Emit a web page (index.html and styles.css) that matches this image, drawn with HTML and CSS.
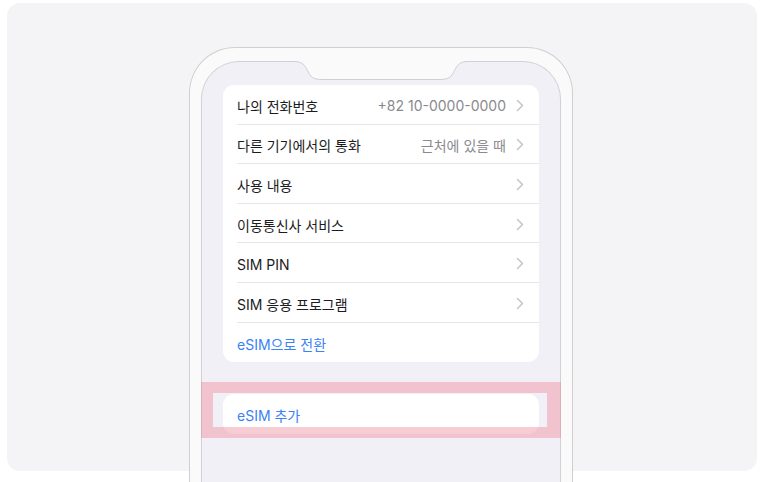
FILE: index.html
```html
<!DOCTYPE html>
<html lang="ko">
<head>
  <meta charset="UTF-8" />
  <meta name="viewport" content="width=device-width, initial-scale=1.0"/>
  <title>셀룰러 설정</title>
  <link rel="stylesheet" href="styles.css">
</head>
<body>
  <div class="stage">
    <div class="phone">
      <div class="screen">
        <svg class="notch" width="176" height="21" viewBox="0 0 176 21">
          <path d="M0,0.5 C9,0.5 11,3 14.5,9.5 C18,16.5 20,18.5 30,18.5 L146,18.5 C156,18.5 158,16.5 161.5,9.5 C165,3 167,0.5 176,0.5 L176,-2 L0,-2 Z" fill="#fafafa"/>
          <path d="M0,0.5 C9,0.5 11,3 14.5,9.5 C18,16.5 20,18.5 30,18.5 L146,18.5 C156,18.5 158,16.5 161.5,9.5 C165,3 167,0.5 176,0.5" fill="none" stroke="#cfcfd3" stroke-width="1"/>
        </svg>

        <div class="group">
          <div class="row">
            <div class="row-body">
              <span class="label">나의 전화번호</span>
              <span class="value">+82 10-0000-0000</span>
              <svg class="chevron" width="8" height="13" viewBox="0 0 8 13"><path d="M1.5,1.5 L6.5,6.5 L1.5,11.5" /></svg>
            </div>
          </div>
          <div class="row">
            <div class="row-body">
              <span class="label">다른 기기에서의 통화</span>
              <span class="value">근처에 있을 때</span>
              <svg class="chevron" width="8" height="13" viewBox="0 0 8 13"><path d="M1.5,1.5 L6.5,6.5 L1.5,11.5" /></svg>
            </div>
          </div>
          <div class="row">
            <div class="row-body">
              <span class="label">사용 내용</span>
              <svg class="chevron" width="8" height="13" viewBox="0 0 8 13"><path d="M1.5,1.5 L6.5,6.5 L1.5,11.5" /></svg>
            </div>
          </div>
          <div class="row">
            <div class="row-body">
              <span class="label">이동통신사 서비스</span>
              <svg class="chevron" width="8" height="13" viewBox="0 0 8 13"><path d="M1.5,1.5 L6.5,6.5 L1.5,11.5" /></svg>
            </div>
          </div>
          <div class="row">
            <div class="row-body">
              <span class="label">SIM PIN</span>
              <svg class="chevron" width="8" height="13" viewBox="0 0 8 13"><path d="M1.5,1.5 L6.5,6.5 L1.5,11.5" /></svg>
            </div>
          </div>
          <div class="row">
            <div class="row-body">
              <span class="label">SIM 응용 프로그램</span>
              <svg class="chevron" width="8" height="13" viewBox="0 0 8 13"><path d="M1.5,1.5 L6.5,6.5 L1.5,11.5" /></svg>
            </div>
          </div>
          <div class="row">
            <div class="row-body">
              <span class="label link">eSIM으로 전환</span>
            </div>
          </div>
        </div>

        <div class="group group-add">
          <div class="row">
            <div class="row-body">
              <span class="label link">eSIM 추가</span>
            </div>
          </div>
          <div class="highlight"></div>
        </div>
      </div>
    </div>
  </div>
</body>
</html>
```

FILE: styles.css
```css
html, body {
  margin: 0;
  background: #ffffff;
  overflow: hidden;
  height: 482px;
}

body {
  font-family: Inter, "Noto Sans CJK KR", sans-serif;
  color: #1c1c1e;
}

.stage {
  margin: 3px 7px 0;
  height: 468px;
  background: #f4f4f6;
  border-radius: 13px;
  padding-top: 44px;
  box-sizing: border-box;
  display: flex;
  justify-content: center;
}

.phone {
  width: 384px;
  height: 450px;
  flex-shrink: 0;
  box-sizing: border-box;
  margin-right: 2px;
  padding: 13px 11px 0;
  background: #fafafa;
  border: 1.5px solid #cfcfd3;
  border-bottom: none;
  border-radius: 46px 46px 0 0;
}

.screen {
  position: relative;
  height: 100%;
  box-sizing: border-box;
  padding: 23px 21px 0;
  background: #f2f0f7;
  border: 1px solid #d2d2d6;
  border-bottom: none;
  border-radius: 38px 38px 0 0;
}

.notch {
  position: absolute;
  top: -1px;
  left: 50%;
  margin-left: -88px;
  overflow: visible;
}

.group {
  background: #ffffff;
  border-radius: 11px;
}

.group-add {
  position: relative;
  margin-top: 32px;
}

.row {
  padding-left: 14px;
}

.row-body {
  display: flex;
  align-items: center;
  height: 39.6px;
  box-sizing: border-box;
  padding-right: 15px;
  border-bottom: 1px solid #e6e6ea;
}

.row:last-child .row-body,
.group-add .row-body {
  border-bottom: none;
}

.label {
  flex: 1;
  font-size: 14px;
  padding-top: 3px;
}

.link {
  color: #3a82f6;
}

.value {
  font-size: 14px;
  color: #8a8a8e;
  margin-right: 10px;
  padding-top: 3px;
}

.chevron {
  display: block;
  margin-top: 2px;
}

.chevron path {
  fill: none;
  stroke: #c5c5c8;
  stroke-width: 1.5;
  stroke-linecap: round;
  stroke-linejoin: round;
}

.highlight {
  position: absolute;
  top: -12px;
  bottom: -4px;
  left: -22px;
  right: -22px;
  border-style: solid;
  border-color: rgba(236, 120, 140, 0.38);
  border-width: 11px 14px 11px 12px;
}
```
